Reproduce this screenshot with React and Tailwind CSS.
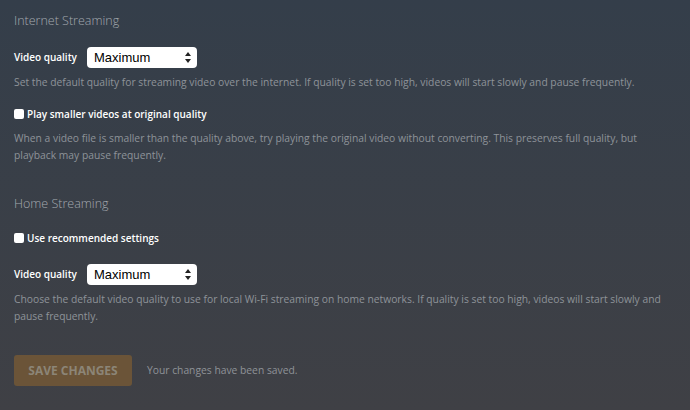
import React from 'react';

const Select = () => (
  <div className="relative w-[110px] h-[21px] bg-white rounded-[4px] flex items-center pl-[7px]">
    <span className="text-[13px] text-black font-['Liberation_Sans',Arial,sans-serif] leading-none">Maximum</span>
    <svg className="absolute right-[6px] top-[5px]" width="6" height="11" viewBox="0 0 6 11">
      <path d="M3 0 L6 4 L0 4 Z" fill="#222" />
      <path d="M0 7 L6 7 L3 11 Z" fill="#222" />
    </svg>
  </div>
);

const Check = ({ label }) => (
  <div className="flex items-center h-[16px]">
    <span className="w-[10px] h-[10px] bg-white rounded-[2px] mr-[3px]" />
    <span className="text-[10px] font-semibold text-white">{label}</span>
  </div>
);

const QualityRow = () => (
  <div className="flex items-center h-[21px]">
    <span className="text-[10px] font-semibold text-white w-[73px]">Video quality</span>
    <Select />
  </div>
);

export default function App() {
  return (
    <div className="w-[690px] h-[410px] overflow-hidden bg-gradient-to-b from-[#343e4a] to-[#3f4045] font-['Open_Sans',sans-serif] pl-[14px] pt-[12px]">
      <h2 className="text-[12.5px] font-light text-[#a3a8ae] leading-[18px]">Internet Streaming</h2>

      <div className="mt-[17px]">
        <QualityRow />
      </div>
      <p className="mt-[6px] text-[10.3px] text-[#8e9399] leading-[17px]">
        Set the default quality for streaming video over the internet. If quality is set too high, videos will start slowly and pause frequently.
      </p>

      <div className="mt-[15px]">
        <Check label="Play smaller videos at original quality" />
      </div>
      <p className="mt-[8px] text-[10.3px] text-[#8e9399] leading-[17px] w-[640px]">
        When a video file is smaller than the quality above, try playing the original video without converting. This preserves full quality, but playback may pause frequently.
      </p>

      <h2 className="mt-[31px] text-[12.5px] font-light text-[#a3a8ae] leading-[18px]">Home Streaming</h2>

      <div className="mt-[17px]">
        <Check label="Use recommended settings" />
      </div>

      <div className="mt-[18px]">
        <QualityRow />
      </div>
      <p className="mt-[6px] text-[10.3px] text-[#8e9399] leading-[17px] w-[665px]">
        Choose the default video quality to use for local Wi-Fi streaming on home networks. If quality is set too high, videos will start slowly and pause frequently.
      </p>

      <div className="mt-[30px] flex items-center">
        <button className="w-[118px] h-[31px] rounded-[3px] bg-[#6b5438] text-[#8c8577] text-[12px] font-bold uppercase">
          Save Changes
        </button>
        <span className="ml-[15px] text-[10.3px] text-[#8f9398]">Your changes have been saved.</span>
      </div>
    </div>
  );
}
